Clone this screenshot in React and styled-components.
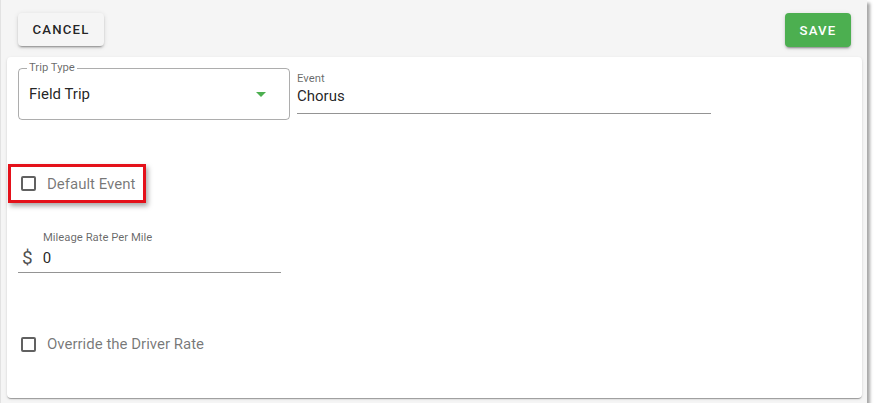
import React from 'react';
import styled, { createGlobalStyle } from 'styled-components';

const GlobalStyle = createGlobalStyle`
  body {
    margin: 0;
    background: #ffffff;
    font-family: Roboto, "Liberation Sans", sans-serif;
  }
`;

const Frame = styled.div`
  width: 867px;
  height: 403px;
  background: #f5f5f5;
  border-left: 1px solid #e2e2e2;
  box-shadow: 3px 3px 3px rgba(0, 0, 0, 0.35);
  display: flex;
  flex-direction: column;
  box-sizing: border-box;
`;

const Toolbar = styled.div`
  display: flex;
  justify-content: space-between;
  align-items: flex-start;
  padding: 13px 16px 0 17px;
  height: 57px;
  box-sizing: border-box;
`;

const Button = styled.button`
  height: ${p => (p.primary ? 34 : 33)}px;
  width: ${p => (p.primary ? 66 : 86)}px;
  padding: 0;
  border: none;
  border-radius: 4px;
  background: ${p => (p.primary ? '#4caf50' : '#f5f5f5')};
  color: ${p => (p.primary ? '#ffffff' : 'rgba(0, 0, 0, 0.87)')};
  font-family: Roboto, "Liberation Sans", sans-serif;
  font-size: 13.2px;
  font-weight: 500;
  letter-spacing: 1.2px;
  text-transform: uppercase;
  box-shadow: 0 3px 1px -2px rgba(0, 0, 0, 0.2), 0 2px 2px 0 rgba(0, 0, 0, 0.14),
    0 1px 5px 0 rgba(0, 0, 0, 0.12);
  cursor: pointer;
`;

const Card = styled.div`
  flex: 1;
  margin: 0 5px 5px 6px;
  background: #ffffff;
  border-radius: 4px;
  box-shadow: 0 2px 1px -1px rgba(0, 0, 0, 0.2), 0 1px 1px 0 rgba(0, 0, 0, 0.14),
    0 1px 3px 0 rgba(0, 0, 0, 0.12);
  padding: 11px 11px;
  display: flex;
  flex-direction: column;
  align-items: flex-start;
`;

const Row = styled.div`
  display: flex;
  align-items: flex-start;
  gap: 7px;
`;

const Outlined = styled.fieldset`
  position: relative;
  width: 272px;
  height: 52px;
  margin: 0;
  padding: 0 10px;
  border: 1px solid rgba(0, 0, 0, 0.32);
  border-radius: 4px;
  box-sizing: border-box;
  display: flex;
  align-items: center;
  justify-content: space-between;
`;

const Legend = styled.legend`
  position: absolute;
  top: -8px;
  left: 8px;
  padding: 0 2px;
  background: #ffffff;
  font-size: 11.3px;
  color: rgba(0, 0, 0, 0.6);
  line-height: 14px;
`;

const Value = styled.span`
  font-size: 15px;
  color: rgba(0, 0, 0, 0.87);
`;

const Arrow = styled.span`
  width: 0;
  height: 0;
  margin-right: 13px;
  border-left: 5px solid transparent;
  border-right: 5px solid transparent;
  border-top: 5px solid #4caf50;
`;

const Underlined = styled.div`
  width: ${p => p.width}px;
  height: 46px;
  border-bottom: 1px solid rgba(0, 0, 0, 0.42);
  box-sizing: border-box;
  display: flex;
  flex-direction: column;
  padding-top: ${p => p.top || 4}px;
`;

const Label = styled.span`
  font-size: 11.3px;
  line-height: 14px;
  color: rgba(0, 0, 0, 0.6);
  padding-left: ${p => p.indent || 0}px;
`;

const InputLine = styled.div`
  display: flex;
  align-items: center;
  gap: 10px;
  margin-top: 1px;
`;

const Dollar = styled.span`
  font-size: 19px;
  color: rgba(0, 0, 0, 0.7);
  padding-left: 4px;
`;

const Highlight = styled.div`
  margin: 44px 0 0 -10px;
  width: 138px;
  height: 39px;
  border: 3px solid #e4111a;
  box-sizing: border-box;
  display: flex;
  align-items: center;
  box-shadow: 2px 3px 5px rgba(0, 0, 0, 0.35);
`;

const CheckRow = styled.label`
  display: flex;
  align-items: center;
  gap: 11px;
  padding-left: ${p => p.indent || 3}px;
  margin-top: ${p => p.top || 0}px;
`;

const Box = styled.span`
  width: 15px;
  height: 15px;
  border: 2px solid #616161;
  border-radius: 2px;
  box-sizing: border-box;
`;

const CheckText = styled.span`
  font-size: 15px;
  color: rgba(0, 0, 0, 0.54);
`;

const Spacer = styled.div`
  height: ${p => p.h}px;
`;

export default function App() {
  return (
    <>
      <GlobalStyle />
      <Frame>
        <Toolbar>
          <Button>Cancel</Button>
          <Button primary>Save</Button>
        </Toolbar>
        <Card>
          <Row>
            <Outlined>
              <Legend>Trip Type</Legend>
              <Value>Field Trip</Value>
              <Arrow />
            </Outlined>
            <Underlined width={414} top={4}>
              <Label>Event</Label>
              <InputLine>
                <Value>Chorus</Value>
              </InputLine>
            </Underlined>
          </Row>
          <Highlight>
            <CheckRow indent={10}>
              <Box />
              <CheckText>Default Event</CheckText>
            </CheckRow>
          </Highlight>
          <Spacer h={24} />
          <Underlined width={263} top={0}>
            <Label indent={25}>Mileage Rate Per Mile</Label>
            <InputLine>
              <Dollar>$</Dollar>
              <Value>0</Value>
            </InputLine>
          </Underlined>
          <CheckRow top={62}>
            <Box />
            <CheckText>Override the Driver Rate</CheckText>
          </CheckRow>
        </Card>
      </Frame>
    </>
  );
}
